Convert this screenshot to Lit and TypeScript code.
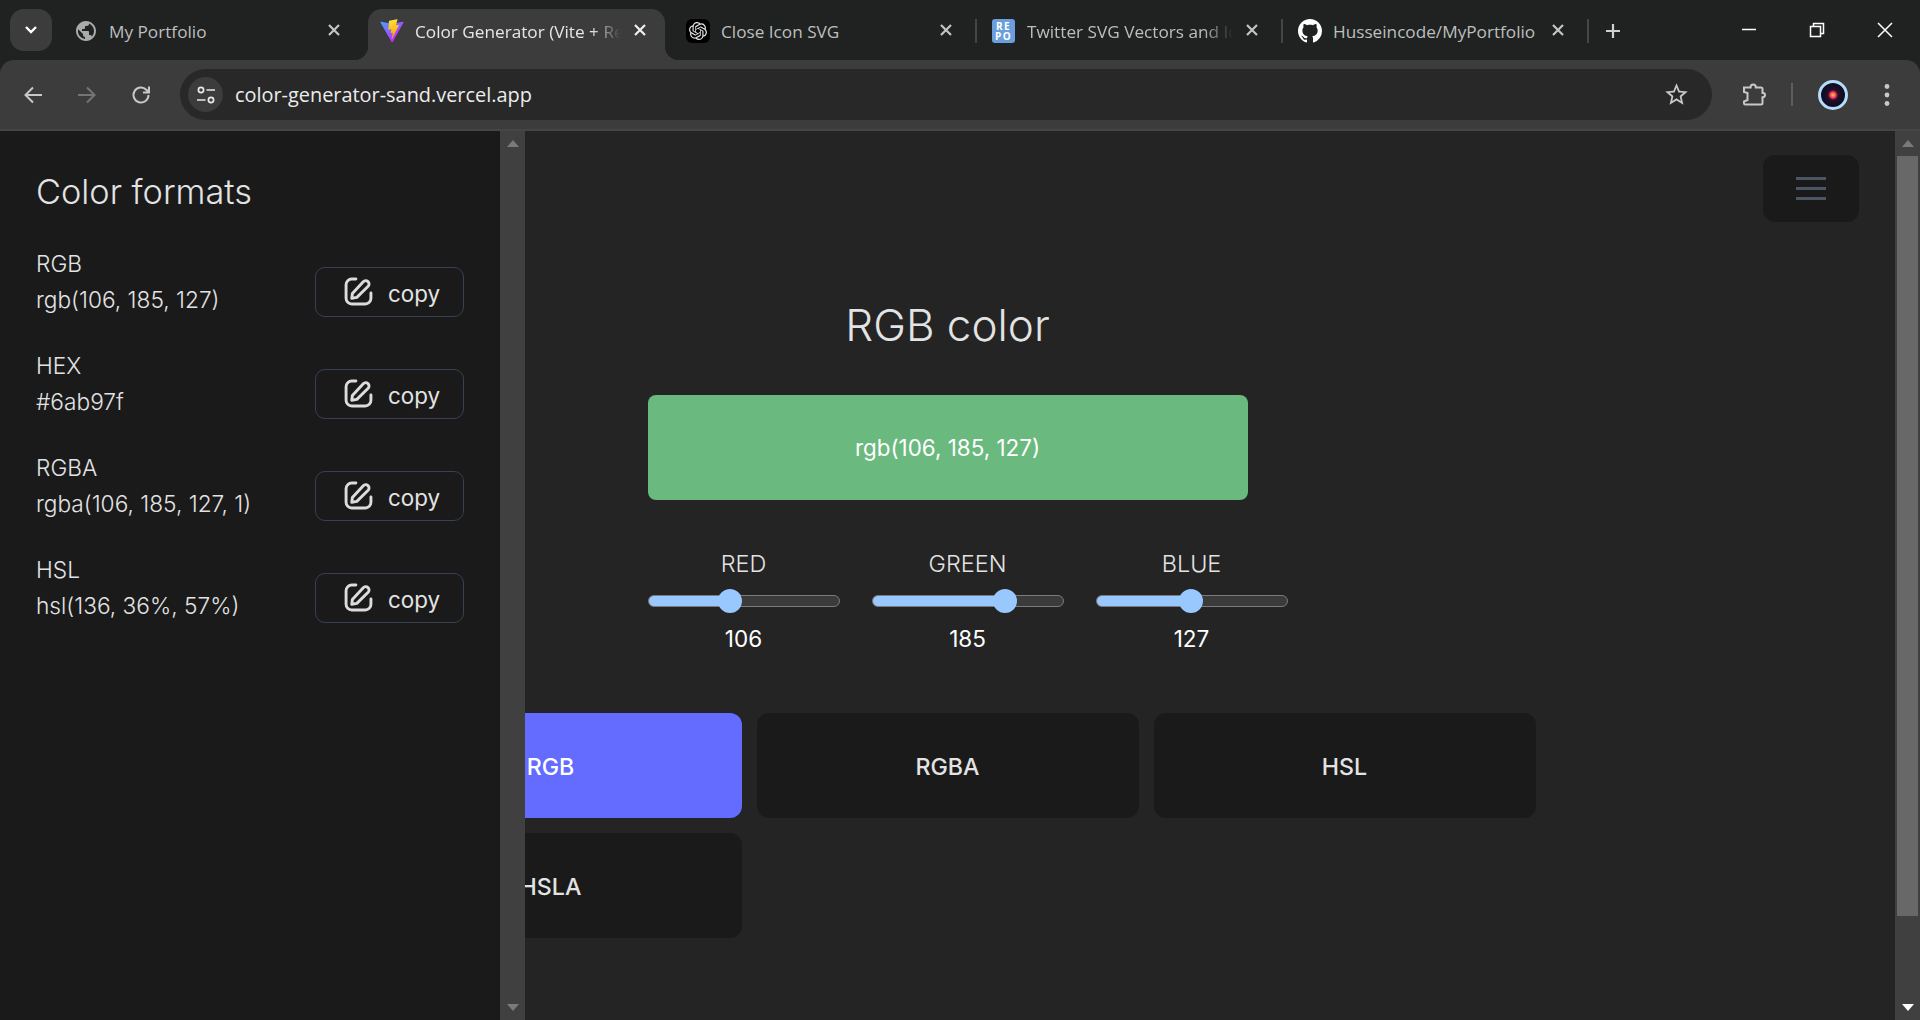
import { LitElement, html, css } from 'lit';
import { customElement, state } from 'lit/decorators.js';

const closeIcon = html`<svg class="tab-close-icon" viewBox="0 0 12 12"><path d="M1 1l10 10M11 1L1 11" /></svg>`;

const globe = html`<svg class="favicon" viewBox="0 0 24 24"><path fill="#a8abaa" d="M12 2C6.48 2 2 6.48 2 12s4.48 10 10 10 10-4.48 10-10S17.52 2 12 2zm-1 17.93c-3.95-.49-7-3.85-7-7.93 0-.62.08-1.21.21-1.79L9 15v1c0 1.1.9 2 2 2v1.93zm6.9-2.54c-.26-.81-1-1.39-1.9-1.39h-1v-3c0-.55-.45-1-1-1H8v-2h2c.55 0 1-.45 1-1V7h2c1.1 0 2-.9 2-2v-.41c2.93 1.19 5 4.06 5 7.41 0 2.08-.8 3.97-2.1 5.39z"/></svg>`;

const vite = html`<svg class="favicon" viewBox="0 0 410 404">
  <defs>
    <linearGradient id="vite-a" x1="6" y1="33" x2="235" y2="344" gradientUnits="userSpaceOnUse"><stop stop-color="#41a6ff"/><stop offset="1" stop-color="#bd34fe"/></linearGradient>
    <linearGradient id="vite-b" x1="194" y1="8" x2="236" y2="292" gradientUnits="userSpaceOnUse"><stop stop-color="#ffea83"/><stop offset=".08" stop-color="#ffdd35"/><stop offset="1" stop-color="#ffa800"/></linearGradient>
  </defs>
  <path fill="url(#vite-a)" d="M399.641 59.5246L215.643 388.545C211.844 395.338 202.084 395.378 198.228 388.618L10.5817 59.5563C6.38087 52.1896 12.6802 43.2665 21.0281 44.7586L205.223 77.6824C206.398 77.8924 207.601 77.8904 208.776 77.6763L389.119 44.8058C397.439 43.2894 403.768 52.1434 399.641 59.5246Z"/>
  <path fill="url(#vite-b)" d="M292.965 1.5744L156.801 28.2552C154.563 28.6937 152.906 30.5903 152.771 32.8664L144.395 174.33C144.198 177.662 147.258 180.248 150.51 179.498L188.42 170.749C191.967 169.931 195.172 173.055 194.443 176.622L183.18 231.775C182.422 235.487 185.907 238.661 189.532 237.56L212.947 230.446C216.577 229.344 220.065 232.527 219.297 236.242L201.398 322.875C200.278 328.294 207.486 331.249 210.492 326.603L212.5 323.5L323.454 102.072C325.312 98.3645 322.108 94.137 318.036 94.9228L279.014 102.454C275.347 103.161 272.227 99.746 273.262 96.1583L298.731 7.86689C299.767 4.27314 296.636 0.855181 292.965 1.5744Z"/>
</svg>`;

const openai = html`<span class="favicon openai"><svg viewBox="0 0 24 24"><path fill="#e4e4e4" d="M22.2819 9.8211a5.9847 5.9847 0 0 0-.5157-4.9108 6.0462 6.0462 0 0 0-6.5098-2.9A6.0651 6.0651 0 0 0 4.9807 4.1818a5.9847 5.9847 0 0 0-3.9977 2.9 6.0462 6.0462 0 0 0 .7427 7.0966 5.98 5.98 0 0 0 .511 4.9107 6.051 6.051 0 0 0 6.5146 2.9001A5.9847 5.9847 0 0 0 13.2599 24a6.0557 6.0557 0 0 0 5.7718-4.2058 5.9894 5.9894 0 0 0 3.9977-2.9001 6.0557 6.0557 0 0 0-.7475-7.0729zm-9.022 12.6081a4.4755 4.4755 0 0 1-2.8764-1.0408l.1419-.0804 4.7783-2.7582a.7948.7948 0 0 0 .3927-.6813v-6.7369l2.02 1.1686a.071.071 0 0 1 .038.052v5.5826a4.504 4.504 0 0 1-4.4945 4.4944zm-9.6607-4.1254a4.4708 4.4708 0 0 1-.5346-3.0137l.142.0852 4.783 2.7582a.7712.7712 0 0 0 .7806 0l5.8428-3.3685v2.3324a.0804.0804 0 0 1-.0332.0615L9.74 19.9502a4.4992 4.4992 0 0 1-6.1408-1.6464zM2.3408 7.8956a4.485 4.485 0 0 1 2.3655-1.9728V11.6a.7664.7664 0 0 0 .3879.6765l5.8144 3.3543-2.0201 1.1685a.0757.0757 0 0 1-.071 0l-4.8303-2.7865A4.504 4.504 0 0 1 2.3408 7.872zm16.5963 3.8558L13.1038 8.364 15.1192 7.2a.0757.0757 0 0 1 .071 0l4.8303 2.7913a4.4944 4.4944 0 0 1-.6765 8.1042v-5.6772a.79.79 0 0 0-.407-.667zm2.0107-3.0231l-.142-.0852-4.7735-2.7818a.7759.7759 0 0 0-.7854 0L9.409 9.2297V6.8974a.0662.0662 0 0 1 .0284-.0615l4.8303-2.7866a4.4992 4.4992 0 0 1 6.6802 4.66zM8.3065 12.863l-2.02-1.1638a.0804.0804 0 0 1-.038-.0567V6.0742a4.4992 4.4992 0 0 1 7.3757-3.4537l-.142.0805L8.704 5.459a.7948.7948 0 0 0-.3927.6813zm1.0976-2.3654l2.602-1.4998 2.6069 1.4998v2.9994l-2.5974 1.4997-2.6067-1.4997Z"/></svg></span>`;

const repo = html`<span class="favicon repo"><span>RE</span><span>PO</span></span>`;

const github = html`<svg class="favicon" viewBox="0 0 16 16"><path fill="#fff" d="M8 0C3.58 0 0 3.58 0 8c0 3.54 2.29 6.53 5.47 7.59.4.07.55-.17.55-.38 0-.19-.01-.82-.01-1.49-2.01.37-2.53-.49-2.69-.94-.09-.23-.48-.94-.82-1.13-.28-.15-.68-.52-.01-.53.63-.01 1.08.58 1.23.82.72 1.21 1.87.87 2.33.66.07-.52.28-.87.51-1.07-1.78-.2-3.64-.89-3.64-3.95 0-.87.31-1.59.82-2.15-.08-.2-.36-1.02.08-2.12 0 0 .67-.21 2.2.82.64-.18 1.32-.27 2-.27.68 0 1.36.09 2 .27 1.53-1.04 2.2-.82 2.2-.82.44 1.1.16 1.92.08 2.12.51.56.82 1.27.82 2.15 0 3.07-1.87 3.75-3.65 3.95.29.25.54.73.54 1.48 0 1.07-.01 1.93-.01 2.2 0 .21.15.46.55.38A8.013 8.013 0 0016 8c0-4.42-3.58-8-8-8z"/></svg>`;

const editIcon = html`<svg class="edit-icon" viewBox="0 0 28 28">
  <path d="M11.5 2H7.5A5.5 5.5 0 0 0 2 7.5v13A5.5 5.5 0 0 0 7.5 26h13a5.5 5.5 0 0 0 5.5-5.5v-5" />
  <path d="M7.5 20.5l.6-4.6L18.6 4.6a3.2 3.2 0 0 1 4.7 4.4L12.4 19.7z" />
</svg>`;

const tabs = [
  { title: 'My Portfolio', icon: globe, sep: false },
  { title: 'Color Generator (Vite + React)', icon: vite, active: true, sep: false, fade: true },
  { title: 'Close Icon SVG', icon: openai, sep: true },
  { title: 'Twitter SVG Vectors and Icons', icon: repo, sep: true, fade: true },
  { title: 'Husseincode/MyPortfolio', icon: github, sep: true },
];

const formats = [
  { name: 'RGB', value: 'rgb(106, 185, 127)' },
  { name: 'HEX', value: '#6ab97f' },
  { name: 'RGBA', value: 'rgba(106, 185, 127, 1)' },
  { name: 'HSL', value: 'hsl(136, 36%, 57%)' },
];

const channels = [
  { name: 'RED', value: 106 },
  { name: 'GREEN', value: 185 },
  { name: 'BLUE', value: 127 },
];

const modes = ['RGB', 'RGBA', 'HSL', 'HSLA'];

@customElement('app-root')
export class AppRoot extends LitElement {
  static styles = css`
    :host {
      display: flex;
      flex-direction: column;
      width: 1920px;
      height: 1020px;
      overflow: hidden;
      background: #202221;
      font-family: 'Inter', sans-serif;
    }

    /* browser frame */
    .tabstrip {
      display: flex;
      align-items: flex-end;
      height: 60px;
      flex: none;
      font-family: 'Open Sans', sans-serif;
    }
    .tab-search {
      display: flex;
      align-items: center;
      justify-content: center;
      align-self: flex-start;
      width: 42px;
      height: 42px;
      margin: 9px 10px 0 10px;
      border-radius: 14px;
      background: #3c3c3c;
    }
    .tab-search svg {
      width: 14px;
      height: 10px;
      fill: none;
      stroke: #fff;
      stroke-width: 2.4;
    }
    .tab {
      position: relative;
      display: flex;
      align-items: center;
      width: 297px;
      height: 51px;
      padding: 0 0 7px 12px;
      box-sizing: border-box;
      color: #bcbfbe;
      font-size: 17.2px;
      border-radius: 14px 14px 0 0;
    }
    .tab.active {
      background: #3c3c3c;
      color: #e6e6e6;
    }
    .tab.active::before,
    .tab.active::after {
      content: '';
      position: absolute;
      bottom: 0;
      width: 14px;
      height: 14px;
    }
    .tab.active::before {
      left: -14px;
      background: radial-gradient(circle at 0 0, transparent 14px, #3c3c3c 14.5px);
    }
    .tab.active::after {
      right: -14px;
      background: radial-gradient(circle at 100% 0, transparent 14px, #3c3c3c 14.5px);
    }
    .favicon {
      flex: none;
      width: 24px;
      height: 24px;
      margin-right: 11px;
    }
    .openai {
      display: flex;
      align-items: center;
      justify-content: center;
      background: #000;
      border-radius: 6px;
    }
    .openai svg {
      width: 18px;
      height: 18px;
    }
    .repo {
      display: flex;
      flex-direction: column;
      align-items: center;
      justify-content: center;
      width: 23px;
      margin-right: 12px;
      background: #6b9fdc;
      border-radius: 3px;
      color: #fff;
      font: 700 10px/10px 'Open Sans', sans-serif;
      letter-spacing: 1.4px;
    }
    .tab-title {
      flex: 1;
      min-width: 0;
      white-space: nowrap;
      overflow: hidden;
    }
    .tab.fade .tab-title {
      -webkit-mask-image: linear-gradient(to right, #000 84%, transparent 98%);
      mask-image: linear-gradient(to right, #000 84%, transparent 98%);
    }
    .tab-close {
      display: flex;
      justify-content: center;
      flex: none;
      width: 20px;
      margin: 0 15px 2px 5px;
    }
    .tab-close-icon {
      width: 12px;
      height: 12px;
      fill: none;
      stroke: #c4c4c4;
      stroke-width: 2.2;
    }
    .active .tab-close-icon {
      stroke: #f0f0f0;
    }
    .tab-gap {
      display: flex;
      justify-content: center;
      align-self: flex-start;
      flex: none;
      width: 9px;
      padding-top: 19px;
    }
    .tab-gap i {
      width: 2px;
      height: 24px;
      background: #444645;
    }
    .tab-gap.none i {
      background: none;
    }
    .new-tab {
      align-self: flex-start;
      width: 16px;
      height: 16px;
      margin: 23px 0 0 13px;
      fill: none;
      stroke: #d0d0d0;
      stroke-width: 2.2;
    }
    .window-controls {
      display: flex;
      align-self: flex-start;
      margin-left: auto;
      padding: 22px 27px 0 0;
      gap: 52px;
    }
    .window-controls svg {
      width: 16px;
      height: 16px;
      fill: none;
      stroke: #fff;
      stroke-width: 1.5;
    }

    .toolbar {
      display: flex;
      align-items: center;
      height: 71px;
      flex: none;
      padding: 0 20px 0 21px;
      box-sizing: border-box;
      background: #3c3c3c;
      border-radius: 14px 14px 0 0;
      border-bottom: 2px solid #454545;
    }
    .nav {
      display: flex;
      gap: 30px;
      margin-right: 27px;
    }
    .nav svg {
      width: 24px;
      height: 24px;
      fill: none;
      stroke: #c8c8c8;
      stroke-width: 2;
    }
    .nav svg.dim {
      stroke: #757575;
    }
    .omnibox {
      display: flex;
      align-items: center;
      width: 1532px;
      height: 51px;
      flex: none;
      padding: 0 17px 0 8px;
      box-sizing: border-box;
      border-radius: 26px;
      background: #282828;
      color: #ececec;
      font: 400 19.9px 'Open Sans', sans-serif;
    }
    .site-info {
      display: flex;
      align-items: center;
      justify-content: center;
      width: 35px;
      height: 35px;
      margin-right: 12px;
      border-radius: 50%;
      background: #3c3c3c;
    }
    .site-info svg {
      width: 20px;
      height: 20px;
      fill: none;
      stroke: #e8e8e8;
      stroke-width: 1.7;
    }
    .url {
      flex: 1;
    }
    .star {
      width: 27px;
      height: 27px;
      margin-right: 5px;
      fill: #c8c8c8;
    }
    .puzzle {
      width: 24px;
      height: 24px;
      margin-left: 30px;
      fill: none;
      stroke: #c8c8c8;
      stroke-width: 2;
    }
    .toolbar-sep {
      width: 2px;
      height: 23px;
      margin: 0 25px;
      background: #5e5e5e;
    }
    .avatar {
      width: 30px;
      height: 30px;
      box-sizing: border-box;
      border: 3.5px solid #b6dcfb;
      border-radius: 50%;
      background: radial-gradient(circle, #ffd24a 0, #f2325a 18%, #2a0d2a 30%, #0d0d24 62%, #2c2c3e 100%);
    }
    .dots {
      width: 6px;
      height: 24px;
      margin-left: 36px;
      fill: #c8c8c8;
    }

    /* page */
    .page {
      position: relative;
      display: flex;
      flex: 1;
      min-height: 0;
      background: #242424;
    }
    .main {
      flex: 1;
      display: flex;
      flex-direction: column;
      align-items: center;
      padding-top: 167px;
      color: #e3e3e3;
    }
    .title {
      margin: 0;
      font: 300 44px/54px 'Inter', sans-serif;
    }
    .swatch {
      display: flex;
      align-items: center;
      justify-content: center;
      width: 600px;
      height: 105px;
      margin-top: 43px;
      border-radius: 8px;
      color: #fff;
      font-size: 22.4px;
      font-weight: 400;
    }
    .sliders {
      display: flex;
      gap: 32px;
      width: 600px;
      margin-top: 50px;
    }
    .channel {
      flex: none;
      width: 192px;
      text-align: center;
      font-size: 23.4px;
      line-height: 28px;
      font-weight: 300;
    }
    .channel output {
      display: block;
      margin-top: 18px;
      color: #fff;
      font-size: 22.5px;
      font-weight: 400;
    }
    input[type='range'] {
      display: block;
      width: 192px;
      height: 24px;
      margin: 11px 0 -6px;
      -webkit-appearance: none;
      appearance: none;
      background: none;
    }
    input[type='range']::-webkit-slider-runnable-track {
      height: 12px;
      box-sizing: border-box;
      border: 1px solid #7b7b7b;
      border-radius: 6px;
      background: linear-gradient(to right, #99c8ff var(--fill), #3b3b3b var(--fill));
    }
    input[type='range']::-webkit-slider-thumb {
      -webkit-appearance: none;
      width: 24px;
      height: 24px;
      margin-top: -7px;
      border-radius: 50%;
      background: #99c8ff;
    }
    .modes {
      display: grid;
      grid-template-columns: repeat(3, 382px);
      gap: 15px;
      margin-top: 60px;
    }
    .mode {
      height: 105px;
      padding: 2px 0 0;
      border: none;
      border-radius: 12px;
      background: #1a1a1a;
      color: #e3e3e3;
      font: 500 23.2px 'Inter', sans-serif;
    }
    .mode.active {
      background: #646cff;
      color: #fff;
    }
    .menu-button {
      position: absolute;
      top: 24px;
      right: 61px;
      display: flex;
      flex-direction: column;
      align-items: center;
      justify-content: center;
      gap: 7px;
      width: 96px;
      height: 67px;
      border: none;
      border-radius: 12px;
      background: #1a1a1a;
    }
    .menu-button i {
      width: 30px;
      height: 3px;
      background: #4b5563;
    }

    /* native-looking scrollbars */
    .scrollbar {
      position: relative;
      display: flex;
      flex-direction: column;
      justify-content: space-between;
      align-items: center;
      flex: none;
      width: 25px;
      padding: 9px 0;
      box-sizing: border-box;
      background: #404040;
    }
    .arrow {
      width: 12px;
      height: 7px;
      fill: #7a7a7a;
    }
    .arrow.bright {
      fill: #fff;
    }
    .scroll-thumb {
      position: absolute;
      top: 25px;
      left: 2px;
      right: 2px;
      height: 760px;
      background: #686868;
    }

    /* color formats drawer */
    .drawer {
      position: absolute;
      top: 0;
      left: 0;
      bottom: 0;
      display: flex;
      width: 525px;
      background: #1a1a1a;
      color: #e3e3e3;
    }
    .drawer-body {
      flex: 1;
      padding: 34px 36px 0 36px;
    }
    .drawer-title {
      margin: 0 0 27px;
      font: 300 34.3px/54px 'Inter', sans-serif;
    }
    .format {
      display: flex;
      align-items: flex-end;
      justify-content: space-between;
      height: 72px;
      margin-bottom: 30px;
      font-size: 22.7px;
      font-weight: 300;
      line-height: 36px;
    }
    .copy {
      display: flex;
      align-items: center;
      gap: 15px;
      width: 149px;
      height: 50px;
      margin-bottom: 1px;
      padding: 2px 0 0 28px;
      box-sizing: border-box;
      border: 1px solid #374151;
      border-radius: 10px;
      background: none;
      color: #e3e3e3;
      font: 400 22.4px 'Inter', sans-serif;
    }
    .edit-icon {
      width: 29px;
      height: 29px;
      margin-top: -4px;
      fill: none;
      stroke: #dcdcdc;
      stroke-width: 2.8;
      stroke-linejoin: round;
      stroke-linecap: round;
    }
  `;

  @state() private format = 'RGB';

  private renderTab(t: (typeof tabs)[number]) {
    return html`
      <div class="tab ${t.active ? 'active' : ''} ${t.fade ? 'fade' : ''}">
        ${t.icon}
        <span class="tab-title">${t.title}</span>
        <span class="tab-close">${closeIcon}</span>
      </div>
      <div class="tab-gap ${t.sep ? '' : 'none'}"><i></i></div>
    `;
  }

  private renderChrome() {
    return html`
      <div class="tabstrip">
        <div class="tab-search">
          <svg viewBox="0 0 14 10"><path d="M2 2l5 5 5-5" /></svg>
        </div>
        ${tabs.map((t) => this.renderTab(t))}
        <svg class="new-tab" viewBox="0 0 16 16"><path d="M8 1v14M1 8h14" /></svg>
        <div class="window-controls">
          <svg viewBox="0 0 16 16"><path d="M1 7.5h14" /></svg>
          <svg viewBox="0 0 16 16"><path d="M1.5 4.5h10v10h-10zM4.5 4.5v-3h10v10h-3" /></svg>
          <svg viewBox="0 0 16 16"><path d="M1 1l14 14M15 1L1 15" /></svg>
        </div>
      </div>
      <div class="toolbar">
        <div class="nav">
          <svg viewBox="0 0 24 24"><path d="M21 12H5M12 4.5L4.5 12l7.5 7.5" /></svg>
          <svg class="dim" viewBox="0 0 24 24"><path d="M3 12h16M12 4.5l7.5 7.5-7.5 7.5" /></svg>
          <svg viewBox="0 0 24 24"><path d="M19.5 12a7.5 7.5 0 1 1-2.2-5.3L20 9.5M20 3.5v6h-6" /></svg>
        </div>
        <div class="omnibox">
          <span class="site-info">
            <svg viewBox="0 0 20 20"><circle cx="5" cy="5" r="2.6" /><path d="M10.5 5H19M1 15h8.5" /><circle cx="15" cy="15" r="2.6" /></svg>
          </span>
          <span class="url">color-generator-sand.vercel.app</span>
          <svg class="star" viewBox="0 0 24 24"><path d="M22 9.24l-7.19-.62L12 2 9.19 8.63 2 9.24l5.46 4.73L5.82 21 12 17.27 18.18 21l-1.63-7.03L22 9.24zM12 15.4l-3.76 2.27 1-4.28-3.32-2.88 4.38-.38L12 6.1l1.71 4.04 4.38.38-3.32 2.88 1 4.28L12 15.4z" /></svg>
        </div>
        <svg class="puzzle" viewBox="0 0 24 24"><path d="M2 4.5h6.6V4a2.6 2.6 0 0 1 5.2 0v.5H19a1.5 1.5 0 0 1 1.5 1.5v4h.4a2.1 2.1 0 0 1 0 4.2h-.4V20a1.5 1.5 0 0 1-1.5 1.5H3.5a1.5 1.5 0 0 1-1.5-1.5v-1.5l3.5-1.5v-7L2 9z" /></svg>
        <span class="toolbar-sep"></span>
        <span class="avatar"></span>
        <svg class="dots" viewBox="0 0 6 24"><circle cx="3" cy="3.5" r="2.4" /><circle cx="3" cy="12" r="2.4" /><circle cx="3" cy="20.5" r="2.4" /></svg>
      </div>
    `;
  }

  private renderScrollbar(thumb: boolean) {
    return html`
      <div class="scrollbar">
        <svg class="arrow" viewBox="0 0 12 7"><path d="M6 0l6 7H0z" /></svg>
        ${thumb ? html`<div class="scroll-thumb"></div>` : ''}
        <svg class="arrow ${thumb ? 'bright' : ''}" viewBox="0 0 12 7"><path d="M0 0h12L6 7z" /></svg>
      </div>
    `;
  }

  render() {
    return html`
      ${this.renderChrome()}
      <div class="page">
        <main class="main">
          <h1 class="title">RGB color</h1>
          <div class="swatch" style="background: rgb(106, 185, 127)">rgb(106, 185, 127)</div>
          <div class="sliders">
            ${channels.map(
              (c) => html`
                <label class="channel">
                  ${c.name}
                  <input type="range" min="0" max="255" .value=${String(c.value)} style="--fill: ${(c.value / 255) * 100}%" />
                  <output>${c.value}</output>
                </label>
              `,
            )}
          </div>
          <div class="modes">
            ${modes.map(
              (m) => html`<button class="mode ${m === this.format ? 'active' : ''}" @click=${() => (this.format = m)}>${m}</button>`,
            )}
          </div>
        </main>
        <button class="menu-button"><i></i><i></i><i></i></button>
        ${this.renderScrollbar(true)}
        <aside class="drawer">
          <div class="drawer-body">
            <h2 class="drawer-title">Color formats</h2>
            ${formats.map(
              (f) => html`
                <div class="format">
                  <div>${f.name}<br />${f.value}</div>
                  <button class="copy">${editIcon}copy</button>
                </div>
              `,
            )}
          </div>
          ${this.renderScrollbar(false)}
        </aside>
      </div>
    `;
  }
}
